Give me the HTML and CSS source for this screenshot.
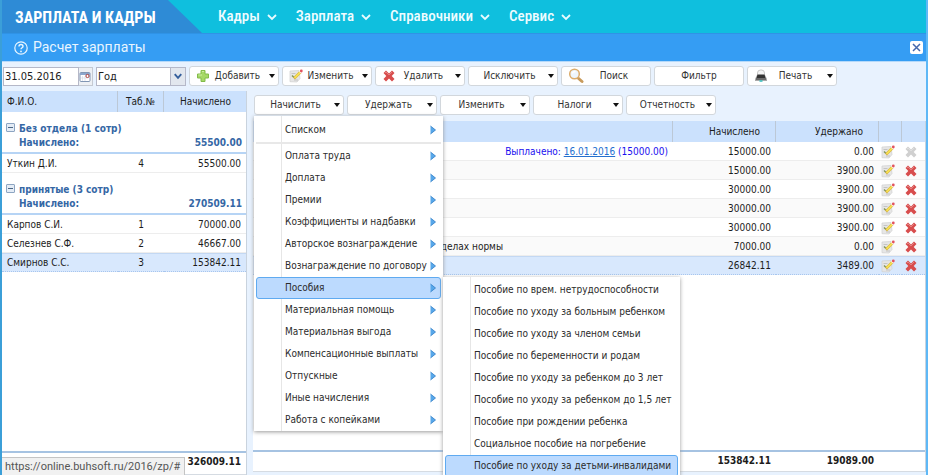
FILE: index.html
```html
<!DOCTYPE html>
<html lang="ru">
<head>
<meta charset="utf-8">
<title>Зарплата и кадры</title>
<link rel="stylesheet" href="styles.css">
</head>
<body>
<svg class="defs" aria-hidden="true">
  <symbol id="i-chev" viewBox="0 0 10 8"><path d="M1 2l4 4 4-4" fill="none" stroke="#e9fbff" stroke-width="1.8"/></symbol>
  <symbol id="i-plus" viewBox="0 0 14 14"><path d="M5 1.500h4V5h3.500v4H9v3.500H5V9H1.500V5H5z" fill="#a5d867" stroke="#82bb4b" stroke-linejoin="round"/><path d="M6 2.500h2M2.500 6H6" stroke="#cdeea2"/></symbol>
  <symbol id="i-x" viewBox="0 0 14 14"><path d="M4 1.500L7 4.500l3-3L12.500 4 9.700 7l2.800 3L10 12.500l-3-3-3 3L1.500 10l2.800-3L1.500 4z" fill="currentColor"/><path d="M3 4l1-1 3 3 3-3" fill="none" stroke="#fff" stroke-opacity=".3"/></symbol>
  <symbol id="i-edit" viewBox="0 0 14 14"><path d="M1 2l9-.5 1 8-3 3.500-7-.3z" fill="#e6e6e6" stroke="#d0d0d0" stroke-width=".7"/><path d="M2.500 4.500h4M5 11h4" stroke="#bbb" stroke-width=".8"/><path d="M3 6.500l2 2" stroke="#819456" stroke-width="1.400"/><path d="M5 9.500L11.500 3" stroke="#cdaa45" stroke-width="2.800"/><path d="M5.500 9L11.500 3" stroke="#f6df51" stroke-width="1.900"/><path d="M11 3.500l1-1" stroke="#fff" stroke-width="2.500"/><circle cx="12.300" cy="2" r="1.400" fill="#e2525d"/></symbol>
  <symbol id="i-search" viewBox="0 0 16 16"><path d="M9.500 9.500l4.500 4" stroke="#c89b5c" stroke-width="3" stroke-linecap="round"/><circle cx="6.500" cy="6" r="4.800" fill="#eef6fc" stroke="#dcac6b" stroke-width="1.500"/><path d="M4 5.500Q5 3.500 7.500 3.500" fill="none" stroke="#fff" stroke-width="1.300"/></symbol>
  <symbol id="i-print" viewBox="0 0 14 14"><path d="M3.500 7V4a3 3 0 013-3h1a3 3 0 013 3v3z" fill="#f4f4f4" stroke="#bbb" stroke-width=".8"/><path d="M3 6h8l2 4v2H1v-2z" fill="#aaa"/><path d="M3.500 5.500h7l1 3.500h-9z" fill="#333"/><path d="M2 10h10" stroke="#555" stroke-width="1.500"/><path d="M5.500 12h3" stroke="#3cc1c0" stroke-width="1.600"/></symbol>
  <symbol id="i-arrow" viewBox="0 0 6 10"><path d="M.5 1v8L5.500 5z" fill="#57a7ea"/><path d="M.5 1l5 4-5 4" fill="none" stroke="#2e7cc5" stroke-width=".8"/></symbol>
</svg>
<div class="app">
  <header class="top">
    <div class="brand">ЗАРПЛАТА И КАДРЫ</div>
    <nav class="nav">
      <a href="#">Кадры <svg><use href="#i-chev"/></svg></a>
      <a href="#">Зарплата <svg><use href="#i-chev"/></svg></a>
      <a href="#">Справочники <svg><use href="#i-chev"/></svg></a>
      <a href="#">Сервис <svg><use href="#i-chev"/></svg></a>
    </nav>
  </header>
  <div class="titlebar">
    <svg class="help" viewBox="0 0 14 14"><circle cx="7" cy="7" r="6.200" fill="none" stroke="#eaf6ff" stroke-width="1.200"/><path d="M5 5.500a2 2 0 114 0c0 1.300-2 1.300-2 2.800" fill="none" stroke="#eaf6ff" stroke-width="1.400"/><circle cx="7" cy="10.400" r=".9" fill="#eaf6ff"/></svg>
    <h1>Расчет зарплаты</h1>
    <button class="close" aria-label="Закрыть"><svg viewBox="0 0 11 11"><path d="M2 2l7 7M9 2l-7 7" stroke="#4568ad" stroke-width="1.500"/></svg></button>
  </div>
  <div class="toolbar">
    <div class="date">
      <input type="text" value="31.05.2016" aria-label="Дата">
      <button class="cal" aria-label="Календарь"><svg viewBox="0 0 12 12"><rect x="1" y="1.500" width="10" height="9" rx="1" fill="#fff" stroke="#8196b4"/><path d="M1 3h10" stroke="#8ba6cc" stroke-width="2"/><path d="M3.500 5v5M6 5v5M2 7h6" stroke="#d4dde9" stroke-width=".7"/><circle cx="8.500" cy="5" r="1.600" fill="#fff" stroke="#a83a3a"/></svg></button>
    </div>
    <div class="period">
      <select aria-label="Период"><option>Год</option></select>
      <svg viewBox="0 0 15 18"><path d="M4 6.500l3.500 4 3.500-4" fill="none" stroke="#345f9c" stroke-width="2"/></svg>
    </div>
    <button class="btn drop"><svg class="ico"><use href="#i-plus"/></svg><span>Добавить</span></button>
    <button class="btn drop"><svg class="ico"><use href="#i-edit"/></svg><span>Изменить</span></button>
    <button class="btn drop"><svg class="ico red"><use href="#i-x"/></svg><span>Удалить</span></button>
    <button class="btn drop"><span>Исключить</span></button>
    <button class="btn"><svg class="ico big"><use href="#i-search"/></svg><span>Поиск</span></button>
    <button class="btn"><span>Фильтр</span></button>
    <button class="btn drop"><svg class="ico"><use href="#i-print"/></svg><span>Печать</span></button>
  </div>
  <main class="panes">
    <section class="people">
      <table class="grid">
        <colgroup><col class="c-name"><col class="c-tab"><col></colgroup>
        <thead><tr><th class="left">Ф.И.О.</th><th class="mid">Таб.№</th><th>Начислено</th></tr></thead>
        <tbody>
          <tr class="group"><td colspan="3"><div><button class="fold" aria-label="Свернуть"></button>Без отдела (1 сотр)</div><div class="sum"><span>Начислено:</span><span>55500.00</span></div></td></tr>
          <tr><td class="left">Уткин Д.И.</td><td class="mid">4</td><td>55500.00</td></tr>
          <tr class="group"><td colspan="3"><div><button class="fold" aria-label="Свернуть"></button>принятые (3 сотр)</div><div class="sum"><span>Начислено:</span><span>270509.11</span></div></td></tr>
          <tr><td class="left">Карпов С.И.</td><td class="mid">1</td><td>70000.00</td></tr>
          <tr><td class="left">Селезнев С.Ф.</td><td class="mid">2</td><td>46667.00</td></tr>
          <tr class="sel"><td class="left">Смирнов С.С.</td><td class="mid">3</td><td>153842.11</td></tr>
        </tbody>
      </table>
      <div class="total"><span>326009.11</span></div>
    </section>
    <section class="detail">
      <div class="toolbar second">
        <div class="holder">
          <button class="btn drop"><span>Начислить</span></button>
          <ul class="menu">
            <li><button>Списком<svg><use href="#i-arrow"/></svg></button></li>
            <li class="sep"></li>
            <li><button>Оплата труда<svg><use href="#i-arrow"/></svg></button></li>
            <li><button>Доплата<svg><use href="#i-arrow"/></svg></button></li>
            <li><button>Премии<svg><use href="#i-arrow"/></svg></button></li>
            <li><button>Коэффициенты и надбавки<svg><use href="#i-arrow"/></svg></button></li>
            <li><button>Авторское вознаграждение<svg><use href="#i-arrow"/></svg></button></li>
            <li><button>Вознаграждение по договору<svg><use href="#i-arrow"/></svg></button></li>
            <li><button class="on">Пособия<svg><use href="#i-arrow"/></svg></button>
              <ul class="menu sub">
                <li><button>Пособие по врем. нетрудоспособности</button></li>
                <li><button>Пособие по уходу за больным ребенком</button></li>
                <li><button>Пособие по уходу за членом семьи</button></li>
                <li><button>Пособие по беременности и родам</button></li>
                <li><button>Пособие по уходу за ребенком до 3 лет</button></li>
                <li><button>Пособие по уходу за ребенком до 1,5 лет</button></li>
                <li><button>Пособие при рождении ребенка</button></li>
                <li><button>Социальное пособие на погребение</button></li>
                <li><button class="on">Пособие по уходу за детьми-инвалидами</button></li>
              </ul>
            </li>
            <li><button>Материальная помощь<svg><use href="#i-arrow"/></svg></button></li>
            <li><button>Материальная выгода<svg><use href="#i-arrow"/></svg></button></li>
            <li><button>Компенсационные выплаты<svg><use href="#i-arrow"/></svg></button></li>
            <li><button>Отпускные<svg><use href="#i-arrow"/></svg></button></li>
            <li><button>Иные начисления<svg><use href="#i-arrow"/></svg></button></li>
            <li><button>Работа с копейками<svg><use href="#i-arrow"/></svg></button></li>
          </ul>
        </div>
        <button class="btn drop"><span>Удержать</span></button>
        <button class="btn drop"><span>Изменить</span></button>
        <button class="btn drop"><span>Налоги</span></button>
        <button class="btn drop"><span>Отчетность</span></button>
      </div>
      <div class="sheet">
        <table class="grid striped">
          <colgroup><col><col class="c-sum"><col class="c-sum"><col class="c-act"><col class="c-act"></colgroup>
          <thead><tr><th></th><th>Начислено</th><th>Удержано</th><th></th><th></th></tr></thead>
          <tbody>
            <tr><td class="paid">Выплачено: <a href="#">16.01.2016</a> (15000.00)</td><td>15000.00</td><td>0.00</td><td class="act"><svg><use href="#i-edit"/></svg></td><td class="act off"><svg><use href="#i-x"/></svg></td></tr>
            <tr><td></td><td>15000.00</td><td>3900.00</td><td class="act"><svg><use href="#i-edit"/></svg></td><td class="act red"><svg><use href="#i-x"/></svg></td></tr>
            <tr><td></td><td>30000.00</td><td>3900.00</td><td class="act"><svg><use href="#i-edit"/></svg></td><td class="act red"><svg><use href="#i-x"/></svg></td></tr>
            <tr><td></td><td>30000.00</td><td>3900.00</td><td class="act"><svg><use href="#i-edit"/></svg></td><td class="act red"><svg><use href="#i-x"/></svg></td></tr>
            <tr><td></td><td>30000.00</td><td>3900.00</td><td class="act"><svg><use href="#i-edit"/></svg></td><td class="act red"><svg><use href="#i-x"/></svg></td></tr>
            <tr><td class="note">пределах нормы</td><td>7000.00</td><td>0.00</td><td class="act"><svg><use href="#i-edit"/></svg></td><td class="act red"><svg><use href="#i-x"/></svg></td></tr>
            <tr class="sel"><td></td><td>26842.11</td><td>3489.00</td><td class="act"><svg><use href="#i-edit"/></svg></td><td class="act red"><svg><use href="#i-x"/></svg></td></tr>
          </tbody>
        </table>
        <div class="total"><span class="c-sum">153842.11</span><span class="c-sum">19089.00</span><span class="c-acts"></span></div>
      </div>
    </section>
  </main>
  <div class="status">https://online.buhsoft.ru/2016/zp/#</div>
</div>
</body>
</html>
```

FILE: styles.css
```css
* { box-sizing: border-box; }
body { margin: 0; font: 10px/14px "DejaVu Sans Condensed", "DejaVu Sans", sans-serif; color: #1c1c1c; }
button, input, select { font: inherit; color: inherit; margin: 0; }
button { cursor: pointer; }
.defs { position: absolute; width: 0; height: 0; }
.app { position: relative; display: flex; flex-direction: column; height: 100vh; overflow: hidden; background: #e8f2fe; border-left: 2px solid #3b9fd8; border-right: 2px solid #5eb8f6; }

.top { display: flex; flex: none; height: 33px; background: #0fbfde; }
.brand { width: 200px; padding-left: 13px; background: #2e8bd6; clip-path: polygon(0 0, 166px 0, 100% 100%, 0 100%); color: #fff; font: bold 16px/35px "Roboto Condensed", Roboto, sans-serif; white-space: nowrap; }
.nav { display: flex; gap: 19px; padding-left: 16px; }
.nav a { display: flex; align-items: center; gap: 7px; color: #effcff; text-decoration: none; font: 500 15px/33px "Roboto Condensed", Roboto, sans-serif; }
.nav svg { width: 10px; height: 8px; }

.titlebar { display: flex; flex: none; align-items: center; height: 29px; padding: 0 3px 0 12px; background: #359df3; border-top: 1px solid #2f93e6; border-bottom: 1px solid #b4d9fa; }
.help { width: 14px; height: 14px; }
h1 { flex: 1; margin: 0 0 0 5px; font: 14px/27px Roboto, sans-serif; color: #e8f5ff; }
.close { display: flex; width: 13px; height: 13px; padding: 1px; border: 0; border-radius: 2px; background: #fff; }
.close svg { width: 11px; height: 11px; }

.toolbar { display: flex; flex: none; gap: 3px; padding: 4px 1px; }
.btn { display: flex; align-items: center; width: 90px; height: 20px; padding: 0 6px; border: 1px solid #d2d7dc; border-radius: 3px; background: #fff; color: #333; }
.btn span { flex: 1; text-align: center; white-space: nowrap; }
.btn.drop { padding-right: 3px; }
.btn.drop::after { content: ""; margin-left: 4px; border: 3px solid transparent; border-top: 4px solid #111; border-bottom: 0; }
.ico { flex: none; width: 14px; height: 14px; }
.big { width: 16px; height: 16px; }
.red { color: #d84d4d; }
.date { display: flex; width: 90px; height: 19px; margin-top: 1px; }
.date input { width: 76px; padding: 0 1px; border: 1px solid #b5b8c8; background: #fff; font-size: 11px; }
.cal { flex: 1; padding: 0; border: 1px solid #c5cad2; border-left: 0; background: #edf0f4; }
.cal svg { display: block; width: 12px; height: 12px; }
.period { position: relative; width: 90px; height: 19px; margin-top: 1px; }
.period select { width: 100%; height: 100%; padding: 0 1px; appearance: none; border: 1px solid #b5b8c8; border-radius: 0; background: #fff; font-size: 11px; }
.period svg { position: absolute; right: 1px; top: 1px; width: 15px; height: 17px; background: #e2e7ee; border-left: 1px solid #b5b8c8; pointer-events: none; }

.panes { display: flex; flex: 1; gap: 6px; min-height: 0; }
.people, .sheet { display: flex; flex-direction: column; background: #fff; border-right: 1px solid #c9d3de; }
.people { width: 245px; margin-top: 1px; }
.detail { display: flex; flex: 1; flex-direction: column; min-width: 0; }
.second { padding-top: 5px; padding-bottom: 6px; }
.sheet { flex: 1; margin-bottom: 3px; }
.grid { width: 100%; table-layout: fixed; border-collapse: separate; border-spacing: 0; }
.c-name { width: 116px; }
.c-tab { width: 46px; }
.c-sum { width: 103px; }
.c-act { width: 23px; }
.c-acts { width: 46px; }
th { height: 21px; padding: 0 15px 0 5px; background: #cbe1fd; border-right: 1px solid #bcc8d6; font-weight: normal; text-align: right; white-space: nowrap; }
th:last-child { border-right: 0; }
td { height: 19px; padding: 2px 5px 0; border-bottom: 1px solid #ededed; line-height: 16px; text-align: right; white-space: nowrap; }
.grid .left { text-align: left; }
.grid .mid { padding-left: 0; padding-right: 0; text-align: center; }
.striped tbody tr:nth-child(even) { background: #fafafa; }
.grid .sel { background: #d8e8fd; }
.sel td { border-bottom: 1px dotted #a8c6ee; box-shadow: inset 0 1px #c3d8f3; }
.group td { height: 42px; padding: 10px 4px 2px 17px; border-bottom: 2px solid #b6d4f5; color: #3567a5; font-weight: bold; line-height: 14px; text-align: left; }
.fold { float: left; width: 9px; height: 9px; margin: 1px 0 0 -13px; padding: 0; border: 1px solid #8da5c2; border-radius: 1px; background: linear-gradient(#4a6583, #4a6583) center / 5px 1px no-repeat #e4ecf6; }
.sum { display: flex; justify-content: space-between; }
td.paid { color: #1a10ef; }
.paid a { color: #2570cf; }
td.note { padding-right: 170px; }
td.act { padding: 2px 0 0 2px; }
.act svg { display: block; width: 14px; height: 14px; }
td.red { color: #d84d4d; }
.off { color: #d0d0d0; }
.total { display: flex; justify-content: flex-end; height: 22px; margin-top: auto; border-top: 2px solid #a6c3e2; border-bottom: 1px solid #d5dbe2; font-weight: bold; line-height: 18px; }
.total span { padding-right: 5px; text-align: right; }
.people .total { height: 24px; }

.holder { position: relative; }
.menu { position: absolute; z-index: 2; top: 21px; left: 0; width: 189px; margin: 0; padding: 3px 2px 0; list-style: none; background: linear-gradient(#e6e6e6, #e6e6e6) 27px 0 / 1px 100% no-repeat #fff; box-shadow: 0 1px 4px #999; }
.menu li { position: relative; height: 22px; }
.menu button { display: flex; align-items: center; justify-content: space-between; width: 100%; height: 22px; padding: 0 4px 0 28px; border: 1px solid transparent; border-radius: 3px; background: none; color: #2b2b2b; white-space: nowrap; }
.menu svg { width: 6px; height: 10px; }
.menu .on { background: #bcdafe; border-color: #5faaf0; }
.menu .sep { height: 2px; margin: 1px 0; background: #e8e8e8; }
.menu .sub { top: 0; left: 187px; width: 237px; padding-top: 2px; }
.status { position: absolute; z-index: 3; left: -2px; bottom: 0; padding: 1px 4px 1px; border: 1px solid #c4c4c4; border-bottom: 0; background: #f1f1f1; color: #555; font: 11px/15px Roboto, sans-serif; }
```
